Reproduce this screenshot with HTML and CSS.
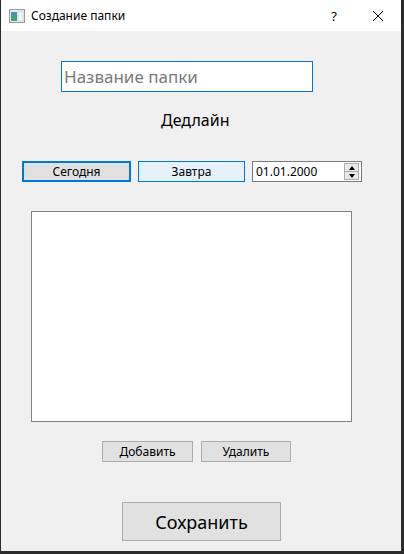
FILE: index.html
```
<!DOCTYPE html>
<html lang="ru">
<head>
<meta charset="utf-8">
<link rel="stylesheet" href="styles.css">
</head>
<body>
<div class="window">
  <div class="titlebar">
    <svg class="app-icon" width="16" height="14" viewBox="0 0 16 14">
      <defs>
        <linearGradient id="g" x1="0" y1="0" x2="0" y2="1">
          <stop offset="0" stop-color="#4a8fc9"/>
          <stop offset="1" stop-color="#3aa56a"/>
        </linearGradient>
      </defs>
      <rect x="0.5" y="0.5" width="15" height="13" fill="#e8e8e8" stroke="#9a9a9a"/>
      <rect x="2" y="3" width="6" height="9" fill="url(#g)"/>
      <rect x="9" y="3" width="5" height="9" fill="#f6f6f6" stroke="#c8c8c8" stroke-width="0.5"/>
    </svg>
    <span class="title">Создание папки</span>
    <span class="help">?</span>
    <svg class="close" width="12" height="12" viewBox="0 0 12 12">
      <path d="M1 1 L11 11 M11 1 L1 11" stroke="#000" stroke-width="1"/>
    </svg>
  </div>
  <div class="content">
    <div class="name-input">Название папки</div>
    <div class="deadline">Дедлайн</div>
    <div class="date-row">
      <button class="btn btn-today">Сегодня</button>
      <button class="btn btn-tomorrow">Завтра</button>
      <div class="date-edit">
        <span class="date-text">01.01.2000</span>
        <div class="spin">
          <div class="spin-btn"><span class="arr-up"></span></div>
          <div class="spin-btn"><span class="arr-down"></span></div>
        </div>
      </div>
    </div>
    <div class="list"></div>
    <div class="list-buttons">
      <button class="btn btn-add">Добавить</button>
      <button class="btn btn-del">Удалить</button>
    </div>
    <button class="btn btn-save">Сохранить</button>
  </div>
</div>
</body>
</html>
```
FILE: styles.css
```
* { box-sizing: border-box; }
html, body { margin: 0; padding: 0; }
body {
  background: #2b2b2b;
  width: 404px;
  height: 554px;
  overflow: hidden;
  font-family: "Noto Sans", "Open Sans", sans-serif;
}
.window {
  width: 402px;
  height: 552px;
  border: 1px solid #2b2b2b;
  border-top: none;
  background: #f0f0f0;
  display: flex;
  flex-direction: column;
}
.titlebar {
  height: 31px;
  background: #fff;
  display: flex;
  align-items: center;
  padding-left: 8px;
  flex: none;
}
.app-icon { margin-top: 1px; }
.title {
  margin-left: 6px;
  font-size: 12px;
  color: #000;
}
.help {
  margin-left: auto;
  font-size: 13px;
  margin-right: 35px;
}
.close { margin-right: 17px; }
.content {
  flex: 1;
  background: #f0f0f0;
  display: flex;
  flex-direction: column;
  align-items: flex-start;
}
.name-input {
  margin: 30px 0 0 60px;
  width: 252px;
  height: 31px;
  border: 1px solid #0078d7;
  background: #fff;
  color: #7a7a7a;
  font-size: 17px;
  line-height: 29px;
  padding-left: 2px;
}
.deadline {
  margin: 18px 0 0 160px;
  font-size: 16px;
  line-height: 20px;
  color: #000;
}
.date-row {
  margin: 31px 0 0 21px;
  display: flex;
  gap: 7px;
}
.btn {
  font-family: "Noto Sans", "Open Sans", sans-serif;
  font-size: 12px;
  color: #000;
  background: #e1e1e1;
  border: 1px solid #adadad;
  padding: 0;
  height: 21px;
  line-height: 17px;
}
.btn-today {
  width: 109px;
  border: 2px solid #0078d7;
}
.btn-tomorrow {
  width: 107px;
  background: #e5f1fb;
  border-color: #0078d7;
}
.date-edit {
  width: 110px;
  height: 21px;
  border: 1px solid #7a7a7a;
  background: #fff;
  display: flex;
  align-items: center;
  padding-left: 3px;
}
.date-text { font-size: 12px; line-height: 17px; }
.spin {
  margin-left: auto;
  margin-right: 2px;
  width: 15px;
  height: 17px;
  display: flex;
  flex-direction: column;
  border: 1px solid #adadad;
  background: #e8e8e8;
}
.spin-btn {
  flex: 1;
  display: flex;
  align-items: center;
  justify-content: center;
}
.spin-btn + .spin-btn { border-top: 1px solid #adadad; }
.arr-up {
  width: 0; height: 0;
  border-left: 3.5px solid transparent;
  border-right: 3.5px solid transparent;
  border-bottom: 4px solid #000;
}
.arr-down {
  width: 0; height: 0;
  border-left: 3.5px solid transparent;
  border-right: 3.5px solid transparent;
  border-top: 4px solid #000;
}
.list {
  margin: 29px 0 0 30px;
  width: 321px;
  height: 211px;
  border: 1px solid #828282;
  background: #fff;
}
.list-buttons {
  margin: 19px 0 0 101px;
  display: flex;
  gap: 8px;
}
.btn-add { width: 91px; }
.btn-del { width: 90px; }
.btn-save {
  margin: 40px 0 0 121px;
  width: 159px;
  height: 39px;
  font-size: 18px;
  line-height: 36px;
}
```
